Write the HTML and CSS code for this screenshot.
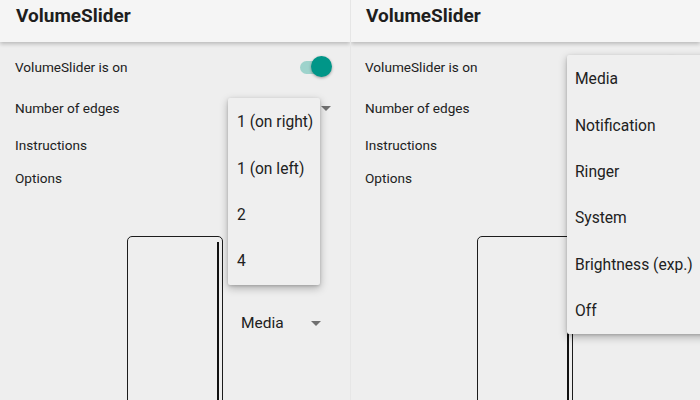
FILE: index.html
```html
<!DOCTYPE html>
<html>
<head>
<meta charset="utf-8">
<link rel="stylesheet" href="styles.css">
</head>
<body>
<div class="screen">
  <section class="panel">
    <header class="appbar"><h1 class="title">VolumeSlider</h1></header>
    <div class="content">
      <div class="row row-1"><span>VolumeSlider is on</span><span class="switch"><span class="track"></span><span class="thumb"></span></span></div>
      <div class="row row-2"><span>Number of edges</span><span class="arrow"></span></div>
      <div class="row row-3"><span>Instructions</span></div>
      <div class="row row-4"><span>Options</span></div>
      <div class="preview">
        <div class="phone"><div class="edge"></div></div>
        <div class="select"><span>Media</span><span class="arrow"></span></div>
      </div>
    </div>
    <ul class="menu menu-edges">
      <li>1 (on right)</li>
      <li>1 (on left)</li>
      <li>2</li>
      <li>4</li>
    </ul>
  </section>
  <section class="panel panel-right">
    <header class="appbar"><h1 class="title">VolumeSlider</h1></header>
    <div class="content">
      <div class="row row-1"><span>VolumeSlider is on</span><span class="switch"><span class="track"></span><span class="thumb"></span></span></div>
      <div class="row row-2"><span>Number of edges</span><span class="arrow"></span></div>
      <div class="row row-3"><span>Instructions</span></div>
      <div class="row row-4"><span>Options</span></div>
      <div class="preview">
        <div class="phone"><div class="edge"></div></div>
        <div class="select"><span>Media</span><span class="arrow"></span></div>
      </div>
    </div>
    <ul class="menu menu-streams">
      <li>Media</li>
      <li>Notification</li>
      <li>Ringer</li>
      <li>System</li>
      <li>Brightness (exp.)</li>
      <li>Off</li>
    </ul>
  </section>
</div>
</body>
</html>
```

FILE: styles.css
```css
* { box-sizing: border-box; }
html, body { margin: 0; padding: 0; }
body {
  width: 700px;
  height: 400px;
  overflow: hidden;
  background: #eeeeee;
  font-family: Roboto, "Liberation Sans", sans-serif;
  color: #212121;
}
.screen {
  display: flex;
  width: 700px;
  height: 400px;
}
.panel {
  position: relative;
  width: 350px;
  height: 400px;
  overflow: hidden;
  background: #eeeeee;
  display: flex;
  flex-direction: column;
}
.panel-right { border-left: 1px solid #e6e6e6; }
.appbar {
  height: 42px;
  flex: none;
  background: #f5f5f5;
  box-shadow: 0 2px 4px rgba(0,0,0,0.22);
  position: relative;
  z-index: 1;
  padding: 5px 0 0 16px;
}
.panel-right .appbar { padding-left: 15px; }
.title {
  margin: 0;
  font-size: 19px;
  font-weight: 700;
  line-height: 22px;
  color: #1e1e1e;
}
.content {
  display: flex;
  flex-direction: column;
  padding-left: 15px;
}
.panel-right .content { padding-left: 14px; }
.row {
  display: flex;
  align-items: center;
  justify-content: space-between;
  font-size: 13.6px;
  padding-right: 17px;
}
.row-1 { height: 50px; }
.row-2 { height: 32px; }
.row-3 { height: 42px; }
.row-4 { height: 24px; }
.switch {
  position: relative;
  width: 36px;
  height: 22px;
  display: flex;
  align-items: center;
}
.track {
  display: block;
  width: 28px;
  height: 13px;
  margin-left: 3px;
  border-radius: 7px;
  background: #9ed3cc;
}
.thumb {
  position: absolute;
  right: 1px;
  top: 0;
  width: 21px;
  height: 21px;
  border-radius: 50%;
  background: #009688;
  box-shadow: 0 1px 3px rgba(0,0,0,0.35);
}
.arrow {
  width: 0;
  height: 0;
  border-left: 5px solid transparent;
  border-right: 5px solid transparent;
  border-top: 5px solid #707070;
  margin-right: 2px;
}
.preview {
  display: flex;
  margin-top: 46px;
  padding-left: 112px;
}
.phone {
  width: 96px;
  height: 200px;
  border: 1.5px solid #1c1c1c;
  border-radius: 5px;
  display: flex;
  justify-content: flex-end;
  padding: 5px 3px 0 0;
  flex: none;
}
.edge {
  width: 2.5px;
  background: #111;
}
.select {
  display: flex;
  align-items: center;
  justify-content: space-between;
  width: 82px;
  margin-left: 18px;
  margin-top: 77px;
  height: 20px;
  font-size: 15.5px;
}
.menu {
  position: absolute;
  margin: 0;
  padding: 1px 0 0;
  list-style: none;
  background: #efefef;
  box-shadow: 0 3px 8px rgba(0,0,0,0.28), 0 1px 3px rgba(0,0,0,0.15);
  border-radius: 2px;
  z-index: 2;
  font-size: 15.6px;
}
.menu li {
  height: 46.4px;
  display: flex;
  align-items: center;
}
.menu-edges {
  left: 228px;
  top: 98px;
  width: 92px;
}
.menu-edges li { padding-left: 9px; }
.menu-streams {
  left: 216px;
  top: 55px;
  width: 150px;
}
.menu-streams li { padding-left: 8px; }
```
